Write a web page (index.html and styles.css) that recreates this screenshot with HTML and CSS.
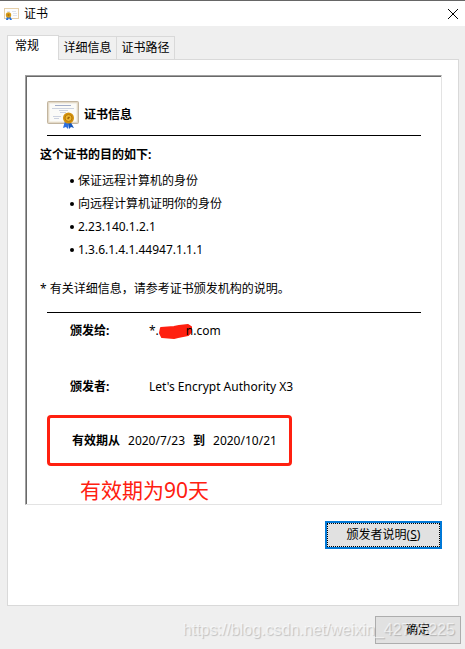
FILE: index.html
```html
<!DOCTYPE html>
<html lang="zh-CN">
<head>
    <meta charset="UTF-8">
    <meta name="viewport" content="width=device-width, initial-scale=1.0">
    <title>证书</title>
    <link rel="stylesheet" href="styles.css">
</head>
<body>

<svg class="symbols" aria-hidden="true">
    <symbol id="certificate" viewBox="0 0 32 28">
        <rect x="0.5" y="0.5" width="31" height="22" rx="1" fill="#d8cdb9" stroke="#c2b59f"/>
        <rect x="2" y="2" width="28" height="19" fill="#fbfbf8" stroke="#eee6d6"/>
        <path d="M8 4.500h16" stroke="#a3adc7"/>
        <path d="M5 7.500h22M12 9.500h9M13 11.500h6M6 15.500h8M7 17.500h5" stroke="#ccd2df"/>
        <path d="M18 20l-2 7 3-1 2 2 1-7z" fill="#2d70df"/>
        <path d="M23 20l4 7-3-1-2 2-1-7z" fill="#1858bd"/>
        <circle cx="21.500" cy="17" r="5.500" fill="#d3910c"/>
        <circle cx="21.500" cy="17" r="3.500" fill="#e9b32e" stroke="#b87908" stroke-width="1"/>
        <path d="M20 17l2-1.500 1 1-2 2z" fill="#9b6207"/>
    </symbol>
    <symbol id="certificate-small" viewBox="0 0 16 14">
        <rect x="0.5" y="1.5" width="14" height="10" fill="#fdfdfd" stroke="#e5cfa9"/>
        <path d="M3 4.500h3M8 4.500h4M9 6.500h4M9 8.500h4" stroke="#dfe4ed"/>
        <path d="M3 9L2 13h2l1-2 1 2h2L6 9z" fill="#2370dc"/>
        <circle cx="4.500" cy="8" r="2.700" fill="#d49a1b"/>
        <circle cx="4.500" cy="8" r="1" fill="#b07508"/>
    </symbol>
</svg>

<header class="title-bar">
    <svg class="title-icon"><use href="#certificate-small"/></svg>
    <h1>证书</h1>
    <button class="close" aria-label="关闭">
        <svg viewBox="0 0 10 10"><path d="M0 0l10 10M10 0L0 10" stroke="#000" stroke-width="1"/></svg>
    </button>
</header>

<main class="dialog">
    <div class="tabs" role="tablist">
        <button class="tab active" role="tab" aria-selected="true">常规</button>
        <button class="tab" role="tab">详细信息</button>
        <button class="tab" role="tab">证书路径</button>
    </div>

    <section class="panel">
        <div class="certificate">
            <div class="heading">
                <svg class="heading-icon"><use href="#certificate"/></svg>
                <h2>证书信息</h2>
            </div>

            <h3>这个证书的目的如下:</h3>
            <ul class="purposes">
                <li>保证远程计算机的身份</li>
                <li>向远程计算机证明你的身份</li>
                <li>2.23.140.1.2.1</li>
                <li>1.3.6.1.4.1.44947.1.1.1</li>
            </ul>
            <p class="note">* 有关详细信息，请参考证书颁发机构的说明。</p>

            <dl class="names">
                <dt>颁发给:</dt>
                <dd>*.<span class="masked"><svg viewBox="0 0 34 16"><path d="M2 4L15 3l5-1 9-1 3 2 0 5-3 3-10 2-4 1-12-1-2-4z" fill="#ff2010" stroke="#ff2010" stroke-width="2" stroke-linejoin="round"/></svg></span>n.com</dd>
                <dt>颁发者:</dt>
                <dd>Let's Encrypt Authority X3</dd>
            </dl>

            <p class="validity">
                <b>有效期从</b>
                <time datetime="2020-07-23">2020/7/23</time>
                <b>到</b>
                <time datetime="2020-10-21">2020/10/21</time>
            </p>
            <p class="remark">有效期为90天</p>
        </div>

        <button class="statement">颁发者说明(<u>S</u>)</button>
    </section>

    <footer class="actions">
        <button class="ok">确定</button>
        <span class="watermark">https://blog.csdn.net/weixin_42775225</span>
    </footer>
</main>

</body>
</html>
```
FILE: styles.css
```css
* {
    box-sizing: border-box;
}

body {
    margin: 0;
    background-color: #efefef;
    color: #000;
    font-family: "Noto Sans", "Noto Sans CJK SC", sans-serif;
    font-size: 12px;
    line-height: 20px;
}

h1, h2, h3, p, ul, dl, dd {
    margin: 0;
    padding: 0;
    font-size: 12px;
}

button {
    font: inherit;
    color: #000;
    padding: 0;
}

.symbols {
    position: absolute;
    width: 0;
    height: 0;
}

.title-bar {
    display: flex;
    align-items: center;
    height: 26px;
    padding: 0 7px 0 4px;
    border-top: 1px solid #666;
    background-color: #fff;
}

.title-bar h1 {
    flex: 1;
    margin-left: 4px;
    font-weight: normal;
}

.title-icon {
    width: 16px;
    height: 14px;
}

.close {
    display: flex;
    border: none;
    background: none;
}

.close svg {
    width: 10px;
    height: 10px;
}

.dialog {
    padding: 9px 6px 0 7px;
}

.tabs {
    display: flex;
    align-items: flex-end;
}

.tab {
    height: 23px;
    width: 58px;
    border: 1px solid #d9d9d9;
    border-left: none;
    border-bottom: none;
    background-color: #f0f0f0;
    white-space: nowrap;
}

.tab.active {
    width: 52px;
    height: 25px;
    margin-bottom: -1px;
    padding: 0 12px 4px 7px;
    border-left: 1px solid #d9d9d9;
    background-color: #fff;
    text-align: left;
    z-index: 1;
}

.panel {
    padding: 15px 16px 56px 17px;
    border: 1px solid #d9d9d9;
    background-color: #fff;
}

.certificate {
    padding: 24px 20px 0 14px;
    border: 1px solid #e3e3e3;
    border-top-color: #a0a0a0;
    border-left-color: #a0a0a0;
    box-shadow: inset 1px 1px #696969;
}

.heading {
    display: flex;
    align-items: center;
    height: 36px;
    margin-left: 7px;
    padding-bottom: 5px;
    border-bottom: 1px solid #000;
}

.heading-icon {
    width: 32px;
    height: 28px;
}

.heading h2 {
    margin-left: 5px;
}

.certificate h3 {
    margin-top: 9px;
}

.purposes {
    margin: 4px 0 0 30px;
    list-style: none;
}

.purposes li {
    display: flex;
    align-items: center;
    height: 23px;
}

.purposes li::before {
    content: "";
    width: 4px;
    height: 4px;
    margin-right: 4px;
    border-radius: 50%;
    background-color: #000;
}

.note {
    margin-top: 18px;
}

.names {
    display: grid;
    grid-template-columns: 79px 1fr;
    row-gap: 36px;
    margin: 13px 0 0 7px;
    padding: 8px 0 0 23px;
    border-top: 1px solid #000;
}

.names dt {
    font-weight: bold;
}

.masked {
    display: inline-block;
    width: 27px;
    height: 16px;
    vertical-align: middle;
}

.masked svg {
    display: block;
    width: 34px;
    height: 16px;
}

.validity {
    display: flex;
    align-items: center;
    gap: 8px;
    width: fit-content;
    height: 51px;
    margin: 18px 0 0 7px;
    padding: 0 12px 0 22px;
    border: 3px solid #ff2010;
    border-radius: 4px;
}

.remark {
    padding: 10px 0 0 40px;
    color: #ff2010;
    font-size: 21px;
    line-height: 28px;
}

.statement {
    display: block;
    width: 117px;
    height: 28px;
    margin: 16px 0 0 auto;
    border: 2px solid #0078d7;
    background-color: #e1e1e1;
    outline: 1px dotted #000;
    outline-offset: -3px;
}

.actions {
    position: relative;
    display: flex;
    justify-content: flex-end;
    padding: 10px 0 4px;
    margin-right: -2px;
}

.ok {
    width: 86px;
    height: 28px;
    border: 1px solid #adadad;
    background-color: #e1e1e1;
}

.watermark {
    position: absolute;
    right: 6px;
    top: 14px;
    color: rgba(255, 255, 255, 0.6);
    font-family: "Liberation Sans", Arial, sans-serif;
    font-size: 16px;
    text-shadow: 1px 1px 1px rgba(0, 0, 0, 0.2);
    pointer-events: none;
}
```
